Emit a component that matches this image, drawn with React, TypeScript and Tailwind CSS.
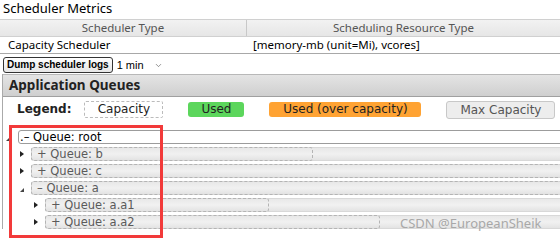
import { ChevronDown } from "lucide-react";

function Tri({ open }: { open: boolean }) {
  return open ? (
    <svg width="4" height="4" viewBox="0 0 4 4" className="mt-[4px]">
      <path d="M4 0 L4 4 L0 4 Z" fill="#444" />
    </svg>
  ) : (
    <svg width="4" height="6" viewBox="0 0 4 6">
      <path d="M0 0 L4 3 L0 6 Z" fill="#222" />
    </svg>
  );
}

function QueueRow({
  indent,
  open,
  label,
  cap,
}: {
  indent: string;
  open: boolean;
  label: string;
  cap: string;
}) {
  return (
    <div className="flex h-[14px] items-center">
      <div className={`${indent} flex justify-end pr-[7px]`}>
        <Tri open={open} />
      </div>
      <div className="flex-1 h-[14px] border border-[#d8d8d8] rounded-l-[3px] bg-[linear-gradient(#e8e8e8,#f1f1f1_50%,#e3e3e3)]">
        <div
          className={`${cap} h-[14px] -mt-px -ml-px border border-dashed border-[#b4b4b4] rounded-[3px] pl-[5px] text-[11.5px] leading-[12px] text-[#5a5a5a] whitespace-nowrap`}
        >
          {open ? "–" : "+"} Queue: {label}
        </div>
      </div>
    </div>
  );
}

export default function App() {
  return (
    <div className="relative w-[560px] h-[241px] overflow-hidden bg-white text-black">
      <div className="pl-[3px] h-[19px] text-[13px] leading-[16px] font-['Noto_Sans',sans-serif]">
        Scheduler Metrics
      </div>

      <div className="font-['Noto_Sans',sans-serif] text-[11.5px]">
        <div className="grid grid-cols-[247px_1fr] h-[18px] border-t border-b border-[#d0d0d0] bg-linear-to-b from-[#f2f2f2] to-[#e6e6e6] text-[#555] leading-[16px]">
          <div className="text-center border-r border-[#c8c8c8]">Scheduler Type</div>
          <div className="text-center">Scheduling Resource Type</div>
        </div>
        <div className="grid grid-cols-[247px_1fr] h-[17px] border-b border-[#a8a8a8] leading-[16px]">
          <div className="pl-[8px]">Capacity Scheduler</div>
          <div className="pl-[6px]">[memory-mb (unit=Mi), vcores]</div>
        </div>
      </div>

      <div className="flex items-center mt-[3px] ml-[3px] h-[16px] font-['Liberation_Sans',sans-serif] text-[11px]">
        <div className="h-[16px] px-[3px] border border-[#333] rounded-[3px] bg-linear-to-b from-white to-[#e6e6e6] font-bold text-[10px] leading-[14px]">
          Dump scheduler logs
        </div>
        <span className="ml-[4px]">1 min</span>
        <ChevronDown size={9} strokeWidth={1.5} className="ml-[10px] text-[#444]" />
      </div>

      <div className="mt-[1px] ml-[2px] border-l border-[#aaa] font-['DejaVu_Sans',sans-serif]">
        <div className="h-[23px] border-t border-b border-t-[#b8b8b8] border-b-[#a0a0a0] bg-linear-to-b from-[#e4e4e4] to-[#cfcfcf] pl-[6px] font-['Noto_Sans',sans-serif] font-bold text-[13.5px] leading-[20px] text-[#222]">
          Application Queues
        </div>

        <div className="h-[33px] pt-[4px] pl-[14px] flex items-start text-[12px] text-[#222]">
          <span className="font-bold leading-[17px] mr-[13px]">Legend:</span>
          <div className="w-[79px] h-[17px] border border-dashed border-[#bbb] rounded-[2px] text-center leading-[15px] text-[#222]">
            Capacity
          </div>
          <div className="ml-[25px] mt-[1px] w-[56px] h-[15px] bg-[#5cd65c] rounded-[3px] text-center leading-[15px] text-[#222]">
            Used
          </div>
          <div className="ml-[25px] mt-[1px] w-[152px] h-[15px] bg-[#ffa333] rounded-[3px] text-center leading-[15px] text-[#222]">
            Used (over capacity)
          </div>
          <div className="ml-[25px] w-[109px] h-[18px] bg-[#ededed] border border-[#c8c8c8] rounded-[3px] text-center leading-[16px] text-[#555]">
            Max Capacity
          </div>
        </div>

        <div className="w-[640px] flex flex-col gap-[3px]">
          <div className="flex h-[14px] items-center">
            <div className="w-[15px] flex justify-end pr-[8px]">
              <Tri open />
            </div>
            <div className="flex-1 h-[14px] border border-[#9c9c9c] rounded-l-[3px] bg-white pl-[1px] text-[11.5px] leading-[12px] whitespace-nowrap">
              .– Queue: root
            </div>
          </div>
          <QueueRow indent="w-[28px]" open={false} label="b" cap="w-[282px]" />
          <QueueRow indent="w-[28px]" open={false} label="c" cap="w-full" />
          <QueueRow indent="w-[28px]" open label="a" cap="w-full" />
          <QueueRow indent="w-[42px]" open={false} label="a.a1" cap="w-[224px]" />
          <QueueRow indent="w-[42px]" open={false} label="a.a2" cap="w-[335px]" />
        </div>
      </div>

      <div className="absolute left-[9px] top-[125px] w-[154px] h-[113px] border-[3px] border-[#f23a3a]" />
      <div className="absolute left-[400px] top-[215px] text-[13px] leading-[16px] text-[#a8a8a8] font-['Noto_Sans',sans-serif]">
        CSDN @EuropeanSheik
      </div>
    </div>
  );
}
